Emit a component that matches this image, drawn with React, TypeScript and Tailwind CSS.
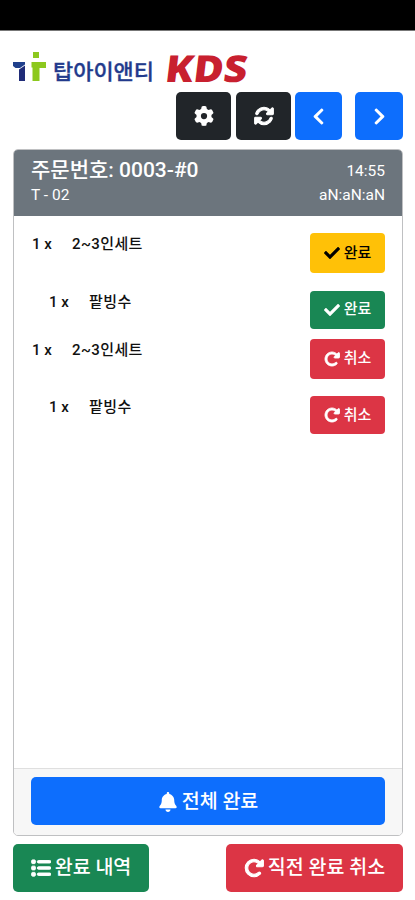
import type { ReactNode } from "react";
import { FaCheck, FaChevronLeft, FaChevronRight } from "react-icons/fa";
import {
  FaBell,
  FaGear,
  FaList,
  FaRotate,
  FaRotateRight,
} from "react-icons/fa6";

type OrderItem_T = {
  name: string;
  count: number;
  isOption: boolean;
  status: "ready" | "optionReady" | "done";
};

const orderItems: OrderItem_T[] = [
  { name: "2~3인세트", count: 1, isOption: false, status: "ready" },
  { name: "팥빙수", count: 1, isOption: true, status: "optionReady" },
  { name: "2~3인세트", count: 1, isOption: false, status: "done" },
  { name: "팥빙수", count: 1, isOption: true, status: "done" },
];

// 상태별 버튼 색상
const statusStyle = {
  ready: "bg-[#ffc107] text-black",
  optionReady: "bg-[#198754] text-white",
  done: "bg-[#dc3545] text-white",
};

function Logo() {
  return (
    <svg
      width="240"
      height="42"
      viewBox="0 0 240 42"
      role="img"
      className="overflow-visible"
    >
      <path d="M0 12h12v2.500L7 18H2.500L0 16z" fill="#20408c" />
      <path d="M6 19.500l6-4V31H6z" fill="#202c78" />
      <path
        d="M20 2h6v6h-6zM18.500 12H33v6h-6.500v13H19.500V17.500h-1z"
        fill="#8cc81e"
      />
      <text
        x="40"
        y="29"
        fontSize="21"
        fontWeight="500"
        fill="#223a8c"
        stroke="#223a8c"
        strokeWidth="0.3"
        textLength="101"
        lengthAdjust="spacingAndGlyphs"
      >
        탑아이앤티
      </text>
      <text
        x="0"
        y="0"
        transform="translate(151 32) skewX(-7)"
        fontSize="37"
        fontWeight="800"
        fill="#c8202f"
        textLength="82"
        lengthAdjust="spacingAndGlyphs"
        className="font-['Open_Sans',sans-serif]"
      >
        KDS
      </text>
    </svg>
  );
}

type NavButtonProps = {
  label: string;
  className: string;
  children: ReactNode;
};

function NavButton({ label, className, children }: NavButtonProps) {
  return (
    <button
      aria-label={label}
      className={`flex h-12 items-center justify-center rounded-[5px] text-white ${className}`}
    >
      {children}
    </button>
  );
}

function OrderRow({ item }: { item: OrderItem_T }) {
  const isDone = item.status === "done";

  return (
    <li
      className={`flex items-start justify-between ${item.isOption ? "h-12 pl-[17px]" : "h-[57.5px]"}`}
    >
      <div className="flex pt-px pl-px text-[15px] leading-5 font-medium text-[#111]">
        <span className="w-10">{item.count} x</span>
        <span className="tracking-[0.4px]">{item.name}</span>
      </div>
      <button
        className={`flex w-[75px] items-center justify-center gap-1 rounded-[4px] text-[15px] font-medium ${item.isOption ? "h-[38px]" : "h-10"} ${statusStyle[item.status]}`}
      >
        {isDone ? (
          <FaRotateRight className="text-[16px] [stroke-width:28]" />
        ) : (
          <FaCheck className="text-[16px]" />
        )}
        <span>{isDone ? "취소" : "완료"}</span>
      </button>
    </li>
  );
}

export default function App() {
  return (
    <div className="flex h-[900px] w-[415px] flex-col bg-white font-[Roboto,'Noto_Sans_CJK_KR',sans-serif]">
      {/* 상태바 */}
      <div className="h-[31px] shrink-0 border-b border-[#777] bg-black" />
      <header className="h-[118px] shrink-0 pr-3 pl-[13px]">
        <div className="h-[61px] pt-[19px]">
          <Logo />
        </div>
        <nav className="flex justify-end">
          <NavButton label="설정" className="mr-[5px] w-[55px] bg-[#212529]">
            <FaGear className="text-[20px]" />
          </NavButton>
          <NavButton label="새로고침" className="mr-1 w-[55px] bg-[#212529]">
            <FaRotate className="text-[20px] [stroke-width:26]" />
          </NavButton>
          <NavButton label="이전" className="mr-[13px] w-[47px] bg-[#0d6efd]">
            <FaChevronLeft className="text-[19px]" />
          </NavButton>
          <NavButton label="다음" className="w-12 bg-[#0d6efd]">
            <FaChevronRight className="text-[19px]" />
          </NavButton>
        </nav>
      </header>

      {/* 주문 카드 */}
      <main className="mr-3 ml-[13px] flex h-[687px] shrink-0 flex-col overflow-hidden rounded-[5px] border border-[#bfc0c2]">
        <div className="flex h-[66px] shrink-0 justify-between bg-[#6c757d] px-[17px] text-white">
          <div>
            <h1 className="pt-[5px] text-[21px] leading-[30px] font-medium">
              주문번호: 0003-#0
            </h1>
            <p className="text-[15.500px] leading-5">T - 02</p>
          </div>
          <div className="pt-[9px] text-right text-[15.500px] leading-6">
            <p>14:55</p>
            <p>aN:aN:aN</p>
          </div>
        </div>
        <ul className="flex-1 px-[17px] pt-[17px]">
          {orderItems.map((item, index) => (
            <OrderRow key={index} item={item} />
          ))}
        </ul>
        <div className="h-[67px] shrink-0 border-t border-[#dfdfdf] bg-[#f7f7f7] px-[17px] pt-2">
          <button className="flex h-12 w-full items-center justify-center gap-1 rounded-[5px] bg-[#0d6efd] pt-px text-[19.500px] font-medium text-white">
            <FaBell className="text-[20px]" />
            전체 완료
          </button>
        </div>
      </main>

      <footer className="mt-2 flex justify-between pr-3 pl-[13px] text-[19.500px] font-medium text-white">
        <button className="flex h-12 w-[136px] items-center justify-center gap-1 rounded-[5px] bg-[#198754]">
          <FaList className="text-[20px] [stroke-width:24]" />
          완료 내역
        </button>
        <button className="flex h-12 w-[177px] items-center justify-center gap-1 rounded-[5px] bg-[#dc3545]">
          <FaRotateRight className="text-[20px] [stroke-width:28]" />
          직전 완료 취소
        </button>
      </footer>
    </div>
  );
}
